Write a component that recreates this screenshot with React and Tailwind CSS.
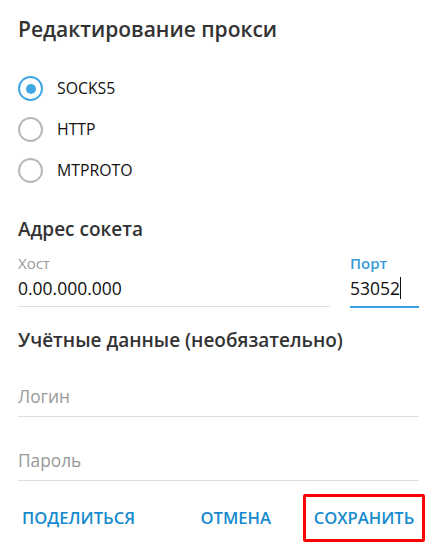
import React from 'react';

const font = { fontFamily: '"Open Sans", "DejaVu Sans", sans-serif' };

const Radio = ({ label, checked }) => (
  <div className="flex items-center h-[41px]">
    <div
      className={`w-[25px] h-[25px] rounded-full border-2 flex items-center justify-center ${
        checked ? 'border-[#40a7e3]' : 'border-[#b8b8b8]'
      }`}
    >
      {checked && <div className="w-[10px] h-[10px] rounded-full bg-[#40a7e3]"></div>}
    </div>
    <span className="ml-[14px] text-[15.8px] text-[#111]">{label}</span>
  </div>
);

const App = () => {
  return (
    <div className="w-[437px] h-[553px] bg-white overflow-hidden" style={font}>
      <div className="px-[18px]">
        {/* Title */}
        <h1 className="pt-[15px] text-[21px] leading-[28px] font-semibold text-[#333]">
          Редактирование прокси
        </h1>

        {/* Proxy type */}
        <div className="mt-[25px] flex flex-col">
          <Radio label="SOCKS5" checked />
          <Radio label="HTTP" />
          <Radio label="MTPROTO" />
        </div>

        {/* Socket address */}
        <h2 className="mt-[26px] text-[19px] leading-[24px] font-semibold text-[#333]">
          Адрес сокета
        </h2>
        <div className="mt-[12px] flex gap-[20px]">
          <div className="flex-1 border-b border-[#dedede]">
            <div className="text-[15px] leading-[20px] text-[#999]">Хост</div>
            <div className="mt-[4px] pb-[7px] text-[17.5px] leading-[22px] text-[#111]">0.00.000.000</div>
          </div>
          <div className="w-[69px] border-b-2 border-[#3a9fe0] -mb-[1px]">
            <div className="text-[15px] leading-[20px] font-semibold text-[#3a9bd9]">Порт</div>
            <div className="mt-[4px] pb-[6px] text-[17.5px] leading-[22px] text-[#111] flex items-center">
              53052<span className="inline-block w-px h-[22px] bg-[#111]"></span>
            </div>
          </div>
        </div>

        {/* Credentials */}
        <h2 className="mt-[21px] text-[19px] leading-[24px] font-semibold text-[#333]">
          Учётные данные (необязательно)
        </h2>
        <div className="mt-[34px] border-b border-[#dedede] pb-[8px] text-[17.3px] leading-[22px] text-[#999]">
          Логин
        </div>
        <div className="mt-[33px] border-b border-[#dedede] pb-[8px] text-[17.3px] leading-[22px] text-[#999]">
          Пароль
        </div>
      </div>

      {/* Buttons */}
      <div className="mt-[13px] flex items-center pl-[22px] pr-[12px]">
        <button className="text-[16.6px] font-semibold text-[#168acd]">ПОДЕЛИТЬСЯ</button>
        <div className="ml-auto flex items-center">
          <button className="text-[16.6px] font-semibold text-[#168acd]">ОТМЕНА</button>
          <div className="ml-[32px] h-[48px] w-[122px] border-[3px] border-[#f00] rounded-[2px] flex items-center justify-center">
            <button className="text-[16.6px] font-semibold text-[#168acd]">СОХРАНИТЬ</button>
          </div>
        </div>
      </div>
    </div>
  );
};

export default App;
